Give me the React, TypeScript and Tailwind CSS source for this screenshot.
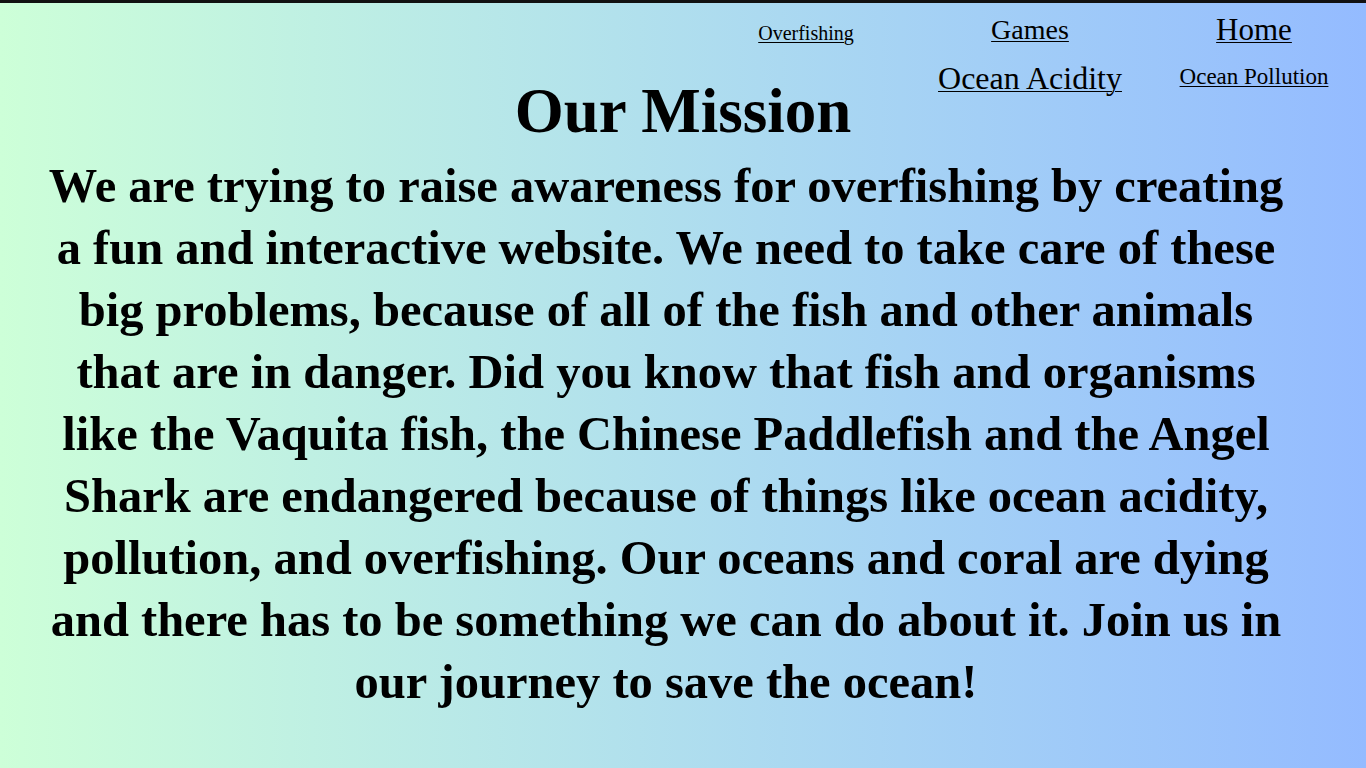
const links = [
  { label: 'Overfishing', cls: 'text-[20px] mt-[6px]' },
  { label: 'Games', cls: 'text-[28px]' },
  { label: 'Home', cls: 'text-[31px] -mt-[2px]' },
  { label: '', cls: '' },
  { label: 'Ocean Acidity', cls: 'text-[32px]' },
  { label: 'Ocean Pollution', cls: 'text-[23px] -mt-[3px]' },
];

const lines = [
  'We are trying to raise awareness for overfishing by creating',
  'a fun and interactive website. We need to take care of these',
  'big problems, because of all of the fish and other animals',
  'that are in danger. Did you know that fish and organisms',
  'like the Vaquita fish, the Chinese Paddlefish and the Angel',
  'Shark are endangered because of things like ocean acidity,',
  'pollution, and overfishing. Our oceans and coral are dying',
  'and there has to be something we can do about it. Join us in',
  'our journey to save the ocean!',
];

export default function App() {
  return (
    <div
      className="min-h-[768px] w-full border-t-[3px] border-[#111] bg-gradient-to-r from-[#cdffd8] to-[#94bbff] text-black"
      style={{ fontFamily: '"Liberation Serif", "DejaVu Serif", serif' }}
    >
      <nav className="flex justify-end">
        <div className="grid w-[672px] grid-cols-3 grid-rows-[54px_42px]">
          {links.map((l, i) => (
            <div key={i} className="flex items-center justify-center">
              {l.label && (
                <a href="#" className={`${l.cls} leading-none underline decoration-1 underline-offset-2`}>
                  {l.label}
                </a>
              )}
            </div>
          ))}
        </div>
      </nav>
      <h1 className="-mt-[18px] text-center text-[63px] font-bold leading-[60px]">Our Mission</h1>
      <p className="mt-[14px] pr-[34px] text-center text-[48.5px] font-bold leading-[62px]">
        {lines.map((t, i) => (
          <span key={i}>
            {t}
            <br />
          </span>
        ))}
      </p>
    </div>
  );
}
